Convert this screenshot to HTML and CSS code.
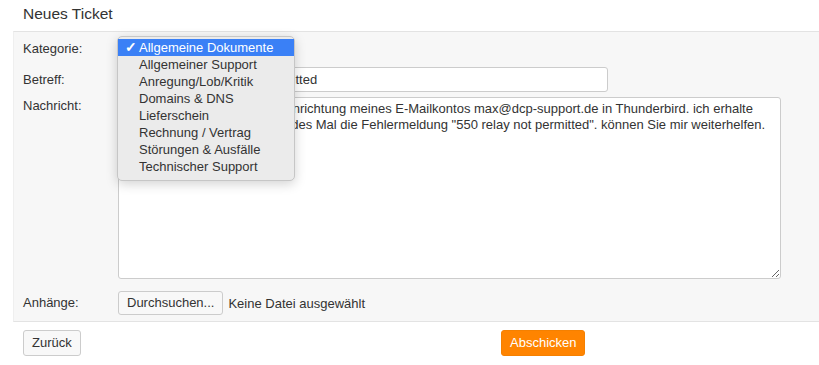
FILE: index.html
```html
<!DOCTYPE html>
<html lang="de">
<head>
  <meta charset="UTF-8" />
  <meta name="viewport" content="width=device-width, initial-scale=1" />
  <title>Neues Ticket</title>
  <link rel="stylesheet" href="styles.css">
</head>
<body>
  <h1 class="page-title">Neues Ticket</h1>

  <form class="ticket-form" onsubmit="return false;">
    <div class="form-panel">
      <div class="form-row row-category">
        <label for="category">Kategorie:</label>
        <select id="category" class="category-select">
          <option>Allgemeine Dokumente</option>
        </select>

        <!-- geöffnetes Auswahlmenü -->
        <ul class="select-menu">
          <li class="active"><span class="check">✓</span>Allgemeine Dokumente</li>
          <li>Allgemeiner Support</li>
          <li>Anregung/Lob/Kritik</li>
          <li>Domains &amp; DNS</li>
          <li>Lieferschein</li>
          <li>Rechnung / Vertrag</li>
          <li>Störungen &amp; Ausfälle</li>
          <li>Technischer Support</li>
        </ul>
      </div>

      <div class="form-row row-subject">
        <label for="subject">Betreff:</label>
        <input type="text" id="subject" class="subject-input" value="SMTP-Fehler: relay not permitted" />
      </div>

      <div class="form-row row-message">
        <label for="message">Nachricht:</label>
        <textarea id="message" class="message-input">Ich habe Probleme bei der Einrichtung meines E-Mailkontos max@dcp-support.de in Thunderbird. ich erhalte
beim Versenden von Mails jedes Mal die Fehlermeldung "550 relay not permitted". können Sie mir weiterhelfen.</textarea>
      </div>

      <div class="form-row row-files">
        <label>Anhänge:</label>
        <button type="button" class="btn btn-default">Durchsuchen...</button>
        <span class="file-status">Keine Datei ausgewählt</span>
      </div>
    </div>

    <div class="form-actions">
      <button type="button" class="btn btn-default">Zurück</button>
      <button type="submit" class="btn btn-primary">Abschicken</button>
    </div>
  </form>
</body>
</html>
```

FILE: styles.css
```css
*, *::before, *::after {
  box-sizing: border-box;
}
body {
  margin: 0;
  font-family: "Liberation Sans", Arial, sans-serif;
  font-size: 13px;
  color: #333;
  background: #fff;
  overflow: hidden;
}
.page-title {
  margin: 0 0 8px;
  padding: 5px 0 0 23px;
  font-size: 15.5px;
  font-weight: normal;
  line-height: 18px;
}
.form-panel {
  margin-left: 13px;
  margin-right: -20px;
  background: #f7f7f7;
  border-top: 1px solid #e3e3e3;
  border-bottom: 1px solid #e3e3e3;
  border-left: 1px solid #efefef;
  padding: 6px 0 6px 9px;
}
.form-row {
  display: flex;
  align-items: center;
}
.form-row label {
  width: 95px;
  flex-shrink: 0;
  line-height: 16px;
}
.row-category {
  position: relative;
  height: 22px;
}
.row-subject {
  margin-top: 7px;
}
.row-message {
  margin-top: 5px;
  align-items: flex-start;
}
.row-message label {
  padding-top: 1px;
}
.row-files {
  margin-top: 12px;
}
.category-select {
  height: 20px;
  width: 170px;
  font: inherit;
}
.subject-input {
  width: 490px;
  height: 25px;
  padding: 0 6px;
  border: 1px solid #ccc;
  border-radius: 3px;
  font: inherit;
  color: #333;
  background: #fff;
}
.message-input {
  width: 663px;
  height: 182px;
  padding: 3px 6px 2px;
  border: 1px solid #ccc;
  border-radius: 3px;
  font: inherit;
  line-height: 16px;
  color: #333;
  background: #fff;
  resize: both;
}
.select-menu {
  position: absolute;
  left: 94px;
  top: -2px;
  width: 178px;
  margin: 0;
  padding: 2px 0 5px;
  list-style: none;
  background: #ebebeb;
  border: 1px solid #c6c6c6;
  border-radius: 5px;
  box-shadow: 0 3px 12px rgba(0,0,0,0.18);
}
.select-menu li {
  position: relative;
  height: 17px;
  line-height: 17px;
  padding-left: 21px;
  color: #333;
  white-space: nowrap;
}
.select-menu li.active {
  background: #3a80f6;
  color: #fff;
}
.select-menu .check {
  position: absolute;
  left: 7px;
  top: 0;
  font-size: 14px;
  font-weight: bold;
}
.btn {
  font: inherit;
  line-height: 16px;
  border-radius: 3px;
  cursor: pointer;
}
.btn-default {
  height: 24px;
  padding: 0 8px;
  background: #f8f8f8;
  border: 1px solid #ccc;
  color: #333;
}
.file-status {
  margin-left: 5px;
}
.form-actions {
  display: grid;
  grid-template-columns: 478px auto;
  justify-items: start;
  padding: 8px 0 0 23px;
}
.form-actions .btn {
  height: 26px;
}
.btn-primary {
  padding: 0 8px;
  background: #ff8400;
  border: 1px solid #f58000;
  color: #fff;
}
```
